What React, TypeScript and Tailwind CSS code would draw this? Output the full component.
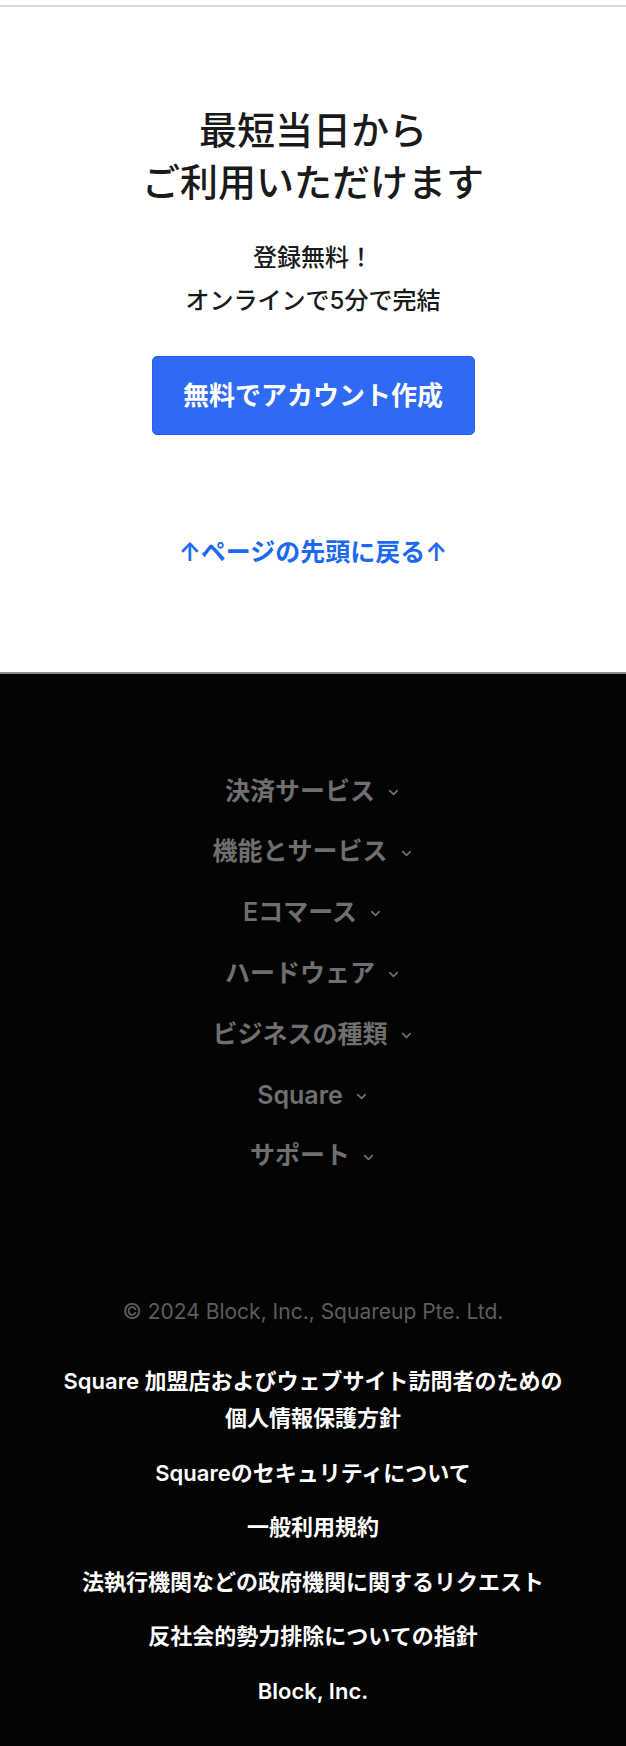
import { ChevronDown } from "lucide-react"

const font = { fontFamily: '"Inter", "Noto Sans CJK JP", sans-serif' }

const navItems = ["決済サービス", "機能とサービス", "Eコマース", "ハードウェア", "ビジネスの種類", "Square", "サポート"]

const legalLinks = [
  "Squareのセキュリティについて",
  "一般利用規約",
  "法執行機関などの政府機関に関するリクエスト",
  "反社会的勢力排除についての指針",
  "Block, Inc.",
]

export default function App() {
  return (
    <div className="w-full min-h-[1746px] bg-white" style={font}>
      {/* top border */}
      <div className="h-[5px] bg-white" />
      <div className="h-[2px] bg-[#d9d9d9]" />

      {/* signup section */}
      <section className="flex flex-col items-center pt-[97px] pb-[102px] text-center">
        <h2 className="text-[38px] leading-[52px] font-medium text-[#1a1a1a]">
          最短当日から
          <br />
          ご利用いただけます
        </h2>
        <p className="mt-[28px] text-[24px] leading-[43px] font-medium text-[#1a1a1a]">
          登録無料！
          <br />
          オンラインで5分で完結
        </p>
        <a
          href="#"
          className="mt-[34px] flex h-[79px] w-[323px] items-center justify-center rounded-[5px] border border-[#2360ec] bg-[#2f6af5] text-[26px] font-bold text-white"
        >
          無料でアカウント作成
        </a>
        <a href="#" className="mt-[99px] text-[25px] leading-[36px] font-semibold text-[#1b68f2]">
          ↑ページの先頭に戻る↑
        </a>
      </section>

      {/* footer */}
      <footer className="border-t-2 border-[#8c8c8c] bg-[#040404] pt-[87px] pb-[37px] text-center">
        <nav className="flex flex-col items-center">
          {navItems.map((item) => (
            <button
              key={item}
              type="button"
              className="flex h-[60.8px] items-center text-[25px] font-semibold text-[#6f6f6f]"
            >
              {item}
              <ChevronDown size={15} strokeWidth={2.75} className="ml-[11px] mt-[2px]" />
            </button>
          ))}
        </nav>

        <p className="mt-[110px] text-[21px] leading-[30px] text-[#5c5c5c]">
          © 2024 Block, Inc., Squareup Pte. Ltd.
        </p>

        <div className="mt-[36px] flex flex-col items-center gap-[17px] text-[22px] leading-[37.5px] font-semibold text-white">
          <a href="#">
            Square 加盟店およびウェブサイト訪問者のための
            <br />
            個人情報保護方針
          </a>
          {legalLinks.map((link) => (
            <a key={link} href="#">
              {link}
            </a>
          ))}
        </div>
      </footer>
    </div>
  )
}
